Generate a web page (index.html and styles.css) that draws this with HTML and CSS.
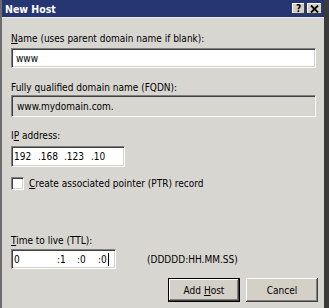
FILE: index.html
```html
<!DOCTYPE html>
<html>
<head>
<meta charset="utf-8">
<link rel="stylesheet" href="styles.css">
</head>
<body>
<div class="window">
  <div class="titlebar">
    <span class="title">New Host</span>
    <div class="tbtns">
      <span class="tbtn help">?</span>
      <span class="tbtn close">
        <svg width="9" height="8" viewBox="0 0 9 8"><path d="M1 0.5 L8 7.5 M8 0.5 L1 7.5" stroke="#000" stroke-width="1.8"/></svg>
      </span>
    </div>
  </div>
  <div class="content">
    <div class="label l-name"><u>N</u>ame (uses parent domain name if blank):</div>
    <div class="field input wide">www</div>
    <div class="label l-fqdn">Fully qualified domain name (FQDN):</div>
    <div class="field readonly wide">www.mydomain.com.</div>
    <div class="label l-ip">I<u>P</u> address:</div>
    <div class="field input ip">
      <span class="seg s1">192</span><span class="seg s2">.168</span><span class="seg s3">.123</span><span class="seg s4">.10</span>
    </div>
    <div class="check-row">
      <span class="checkbox"></span>
      <span class="check-label"><u>C</u>reate associated pointer (PTR) record</span>
    </div>
    <div class="label l-ttl"><u>T</u>ime to live (TTL):</div>
    <div class="ttl-row">
      <div class="field input ttl">
        <span class="t t1">0</span><span class="t t2">:1</span><span class="t t3">:0</span><span class="t t4">:0</span><span class="caret"></span>
      </div>
      <span class="fmt">(DDDDD:HH.MM.SS)</span>
    </div>
    <div class="buttons">
      <span class="btn default"><span>Add <u>H</u>ost</span></span>
      <span class="btn"><span>Cancel</span></span>
    </div>
  </div>
</div>
</body>
</html>
```
FILE: styles.css
```css
html, body {
  margin: 0;
  padding: 0;
  background: #d6d4cf;
}
body {
  width: 329px;
  height: 308px;
  overflow: hidden;
  font-family: "DejaVu Sans Condensed", "DejaVu Sans", sans-serif;
  font-size: 10px;
  color: #000;
}
.window {
  width: 329px;
  height: 308px;
  box-sizing: border-box;
  background: #d8d6d1;
  border-left: 2px solid #6c6c6c;
  border-right: 5px solid #3a3a3a;
}
.titlebar {
  height: 17px;
  background: #263672;
  display: flex;
  align-items: center;
  justify-content: space-between;
  padding: 0 2px 0 3px;
  border-bottom: 1px solid #e8e8e8;
}
.title {
  color: #fff;
  font-weight: bold;
  font-size: 10.5px;
}
.tbtns {
  display: flex;
  gap: 2px;
}
.tbtn {
  width: 13px;
  height: 11px;
  background: #d4d0c8;
  box-shadow: inset -1px -1px #404040, inset 1px 1px #fff;
  display: flex;
  align-items: center;
  justify-content: center;
  font-weight: bold;
  font-size: 10px;
  line-height: 11px;
}
.tbtn.close { width: 15px; }
.content {
  padding: 0 6px 0 9px;
}
.label {
  height: 14px;
  line-height: 14px;
}
.l-name { margin-top: 14px; margin-bottom: 2px; }
.l-fqdn { margin-top: 13px; margin-bottom: 0; }
.l-ip { margin-top: 12px; margin-bottom: 3px; }
.l-ttl { margin-top: 44px; margin-bottom: 1px; }
.field {
  box-sizing: border-box;
  border-top: 1px solid #808080;
  border-left: 1px solid #808080;
  border-bottom: 1px solid #fff;
  border-right: 1px solid #fff;
  box-shadow: inset 1px 1px #404040, inset -1px -1px #d4d0c8;
  padding: 0 4px;
  display: flex;
  align-items: center;
  white-space: nowrap;
}
.input { background: #fff; }
.readonly { background: #d8d6d1; }
.wide { width: 305px; }
.input.wide { height: 20px; }
.readonly.wide { height: 22px; padding-left: 5px; }
.ip {
  width: 114px;
  height: 21px;
  padding-left: 2px;
}
.seg { display: inline-block; }
.s1 { width: 24px; }
.s2 { width: 26px; }
.s3 { width: 27px; }
.s4 { width: 25px; }
.check-row {
  display: flex;
  align-items: center;
  margin-top: 10px;
  gap: 5px;
  height: 13px;
}
.checkbox {
  width: 13px;
  height: 13px;
  box-sizing: border-box;
  background: #fff;
  border-top: 1px solid #808080;
  border-left: 1px solid #808080;
  border-bottom: 1px solid #fff;
  border-right: 1px solid #fff;
  box-shadow: inset 1px 1px #404040, inset -1px -1px #d4d0c8;
}
.ttl-row {
  display: flex;
  align-items: center;
  gap: 31px;
}
.ttl {
  width: 105px;
  height: 20px;
  padding-left: 2px;
}
.t { display: inline-block; }
.t1 { width: 43px; }
.t2 { width: 20px; }
.t3 { width: 21px; }
.caret {
  display: inline-block;
  width: 1px;
  height: 13px;
  background: #000;
  margin-left: 1px;
}
.buttons {
  display: flex;
  justify-content: flex-end;
  gap: 6px;
  margin-top: 9px;
}
.btn {
  box-sizing: border-box;
  width: 72px;
  height: 24px;
  display: flex;
  align-items: center;
  justify-content: center;
  background: #d4d0c8;
  box-shadow: inset -1px -1px #404040, inset 1px 1px #fff, inset -2px -2px #808080;
}
.btn.default {
  border: 1px solid #000;
}
u { text-decoration: underline; text-underline-offset: 1px; }
```
